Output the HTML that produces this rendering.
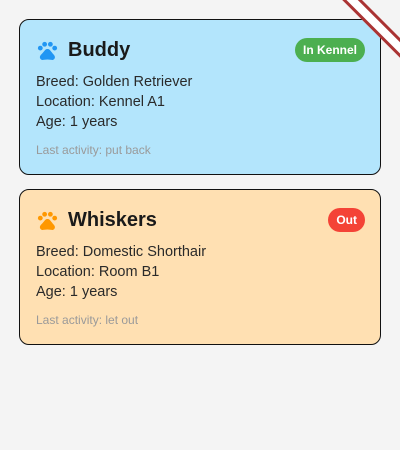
<!DOCTYPE html>
<html><head><style>
body{margin:0;width:400px;height:450px;background:#f4f4f4;font-family:"Liberation Sans",sans-serif;position:relative;overflow:hidden}
.card{position:absolute;left:19px;width:362px;height:156px;border:1px solid #111;border-radius:10px;box-sizing:border-box}
.title{position:absolute;left:48px;top:19px;font-size:20px;font-weight:bold;color:#1a1a1a}
.paw{position:absolute;left:16px;top:19px}
.badge{position:absolute;top:18px;right:15px;height:24px;border-radius:12px;color:#fff;font-size:12px;font-weight:bold;line-height:24px;padding:0 8px}
.l{position:absolute;left:16px;font-size:14.5px;color:#2a2a2a}
.s{position:absolute;left:16px;top:123px;font-size:12px;color:#9a9a9a}
.banner{position:absolute;width:110px;height:8px;background:#fff;border-top:3px solid #a33;border-bottom:3px solid #a33;transform:rotate(45deg);transform-origin:0 0}
</style></head><body>
<div class="card" style="top:19px;background:#b3e5fc">
<svg class="paw" width="23" height="23" viewBox="0 0 24 24" fill="#2196f3"><circle cx="4.5" cy="9.5" r="2.5"/><circle cx="9" cy="5.5" r="2.5"/><circle cx="15" cy="5.5" r="2.5"/><circle cx="19.5" cy="9.5" r="2.5"/><path d="M17.3 14.9c-.9-1-1.6-1.9-2.4-2.9-.5-.6-1-1.1-1.8-1.4-.4-.1-.8-.2-1.1-.2s-.8 0-1.1.2c-.8.3-1.3.8-1.8 1.4-.8 1-1.6 1.9-2.4 2.9-1.3 1.3-2.9 2.7-2.6 4.7.3 1 1 2 2.3 2.3.7.1 3-.5 5.4-.5h.2c2.4 0 4.7.6 5.4.5 1.3-.3 2-1.3 2.3-2.3.3-2-1.3-3.4-2.6-4.7z"/></svg>
<div class="title">Buddy</div>
<div class="badge" style="background:#4caf50">In Kennel</div>
<div class="l" style="top:54px">Breed: Golden Retriever</div>
<div class="l" style="top:74px">Location: Kennel A1</div>
<div class="l" style="top:94px">Age: 1 years</div>
<div class="s">Last activity: put back</div>
</div>
<div class="card" style="top:189px;background:#ffe0b2">
<svg class="paw" width="23" height="23" viewBox="0 0 24 24" fill="#ff9800"><circle cx="4.5" cy="9.5" r="2.5"/><circle cx="9" cy="5.5" r="2.5"/><circle cx="15" cy="5.5" r="2.5"/><circle cx="19.5" cy="9.5" r="2.5"/><path d="M17.3 14.9c-.9-1-1.6-1.9-2.4-2.9-.5-.6-1-1.1-1.8-1.4-.4-.1-.8-.2-1.1-.2s-.8 0-1.1.2c-.8.3-1.3.8-1.8 1.4-.8 1-1.6 1.9-2.4 2.9-1.3 1.3-2.9 2.7-2.6 4.7.3 1 1 2 2.3 2.3.7.1 3-.5 5.4-.5h.2c2.4 0 4.7.6 5.4.5 1.3-.3 2-1.3 2.3-2.3.3-2-1.3-3.4-2.6-4.7z"/></svg>
<div class="title">Whiskers</div>
<div class="badge" style="background:#f44336">Out</div>
<div class="l" style="top:54px">Breed: Domestic Shorthair</div>
<div class="l" style="top:74px">Location: Room B1</div>
<div class="l" style="top:94px">Age: 1 years</div>
<div class="s">Last activity: let out</div>
</div>
<div class="banner" style="left:350px;top:-12px"></div>
</body></html>
